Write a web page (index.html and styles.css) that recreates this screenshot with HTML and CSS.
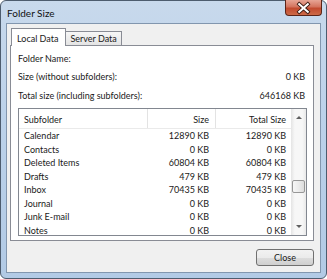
FILE: index.html
```html
<!DOCTYPE html>
<html lang="en">
<head>
  <meta charset="UTF-8" />
  <title>Folder Size</title>
  <link rel="stylesheet" href="styles.css">
</head>
<body>

  <div class="window">
    <div class="titlebar">
      <span class="title">Folder Size</span>
      <span class="close-x">
        <svg width="37" height="16" viewBox="0 0 37 16">
          <path d="M14 4 L23 12 M23 4 L14 12" stroke="#3a1a12" stroke-width="4" stroke-linecap="square"/>
          <path d="M14 4 L23 12 M23 4 L14 12" stroke="#fff" stroke-width="2.2" stroke-linecap="square"/>
        </svg>
      </span>
    </div>

    <div class="client">
      <div class="tabs">
        <span class="tab selected">Local Data</span>
        <span class="tab">Server Data</span>
      </div>

      <div class="panel">
        <div class="info-row"><span>Folder Name:</span><span></span></div>
        <div class="info-row"><span>Size (without subfolders):</span><span>0 KB</span></div>
        <div class="info-row"><span>Total size (including subfolders):</span><span>646168 KB</span></div>

        <div class="listbox">
          <div class="list">
            <div class="list-head">
              <span class="col-name">Subfolder</span>
              <span class="col-size">Size</span>
              <span class="col-total">Total Size</span>
            </div>
            <div class="list-row"><span class="col-name">Calendar</span><span class="col-size">12890 KB</span><span class="col-total">12890 KB</span></div>
            <div class="list-row"><span class="col-name">Contacts</span><span class="col-size">0 KB</span><span class="col-total">0 KB</span></div>
            <div class="list-row"><span class="col-name">Deleted Items</span><span class="col-size">60804 KB</span><span class="col-total">60804 KB</span></div>
            <div class="list-row"><span class="col-name">Drafts</span><span class="col-size">479 KB</span><span class="col-total">479 KB</span></div>
            <div class="list-row"><span class="col-name">Inbox</span><span class="col-size">70435 KB</span><span class="col-total">70435 KB</span></div>
            <div class="list-row"><span class="col-name">Journal</span><span class="col-size">0 KB</span><span class="col-total">0 KB</span></div>
            <div class="list-row"><span class="col-name">Junk E-mail</span><span class="col-size">0 KB</span><span class="col-total">0 KB</span></div>
            <div class="list-row"><span class="col-name">Notes</span><span class="col-size">0 KB</span><span class="col-total">0 KB</span></div>
          </div>
          <div class="scrollbar">
            <span class="sb-btn"><span class="arrow up"></span></span>
            <div class="track"><span class="thumb"></span></div>
            <span class="sb-btn"><span class="arrow down"></span></span>
          </div>
        </div>
      </div>

      <div class="buttons">
        <button class="btn">Close</button>
      </div>
    </div>
  </div>

</body>
</html>
```

FILE: styles.css
```css
body {
  margin: 0;
  background-color: #fff;
  font-family: Lato, "Open Sans", sans-serif;
  font-size: 9px;
  color: #1a1a1a;
}

.window {
  width: 327px;
  height: 279px;
  box-sizing: border-box;
  border: 1px solid #4d5c6e;
  border-radius: 6px;
  background: linear-gradient(to bottom, #c8d9ec 0%, #bcd2ea 40%, #b2cae5 100%);
  padding: 0 5px 5px 5px;
  display: flex;
  flex-direction: column;
}

.titlebar {
  height: 22px;
  flex: none;
  display: flex;
  align-items: flex-start;
  justify-content: space-between;
}

.title {
  font-size: 10px;
  color: #111;
  margin-top: 6px;
  margin-left: 1px;
}

.close-x {
  width: 37px;
  height: 16px;
  margin-top: -1px;
  margin-right: -1px;
  box-sizing: border-box;
  border: 1px solid #5b2418;
  border-top: none;
  border-radius: 0 0 4px 4px;
  background: linear-gradient(to bottom, #e7a595 0%, #d4745e 45%, #c24a2f 55%, #cc6a47 100%);
  display: flex;
}

.client {
  height: 250px;
  box-sizing: border-box;
  background-color: #f0f0f0;
  border: 1px solid #8296ae;
  padding: 4px 6px 6px 3px;
  display: flex;
  flex-direction: column;
}

.tabs {
  height: 17px;
  flex: none;
  display: flex;
  align-items: flex-end;
  padding-left: 1px;
  position: relative;
  z-index: 1;
}

.tab {
  height: 13px;
  line-height: 14px;
  padding: 0 4px;
  border: 1px solid #898c95;
  border-bottom: none;
  background: linear-gradient(to bottom, #f6f6f6, #e4e4e4);
  margin-left: -1px;
}

.tab.selected {
  height: 17px;
  line-height: 19px;
  background-color: #fff;
  background-image: none;
  margin-bottom: -1px;
  padding: 0 7px 0 5px;
  margin-left: 0;
}

.panel {
  height: 196px;
  flex: none;
  box-sizing: border-box;
  background-color: #fff;
  border: 1px solid #898c95;
  padding: 2.75px 8px 0 7px;
  display: flex;
  flex-direction: column;
}

.info-row {
  height: 18.5px;
  line-height: 20px;
  display: flex;
  justify-content: space-between;
}

.listbox {
  height: 128px;
  flex: none;
  box-sizing: border-box;
  margin-top: 3.75px;
  margin-right: -2px;
  border: 1px solid #828790;
  display: flex;
  overflow: hidden;
}

.list {
  flex: 1;
  overflow: hidden;
}

.list-head,
.list-row {
  display: flex;
}

.list-head {
  height: 19px;
  line-height: 21px;
  border-bottom: 1px solid #eaeaea;
}

.list-row {
  height: 13.5px;
  line-height: 14.5px;
}

.col-name {
  width: 128px;
  padding-left: 5px;
  box-sizing: border-box;
}

.col-size {
  width: 68px;
  text-align: right;
  padding-right: 6px;
  box-sizing: border-box;
}

.col-total {
  flex: 1;
  text-align: right;
  padding-right: 5px;
}

.list-head .col-size,
.list-head .col-total {
  border-left: 1px solid #e3e3e3;
}

.scrollbar {
  width: 15px;
  flex: none;
  background: linear-gradient(to right, #e4e4e4, #f7f7f7 25%, #f7f7f7 75%, #e9e9e9);
  display: flex;
  flex-direction: column;
}

.sb-btn {
  height: 17px;
  display: flex;
  align-items: center;
  justify-content: center;
}

.arrow {
  width: 0;
  height: 0;
  border-left: 3px solid transparent;
  border-right: 3px solid transparent;
}

.arrow.up {
  border-bottom: 3px solid #606060;
}

.arrow.down {
  border-top: 3px solid #606060;
}

.track {
  flex: 1;
  display: flex;
  justify-content: center;
}

.thumb {
  width: 13px;
  height: 13px;
  margin-top: 54px;
  box-sizing: border-box;
  border: 1px solid #979797;
  border-radius: 2px;
  background: linear-gradient(to right, #f7f7f7, #ececec 50%, #dcdcdc);
}

.buttons {
  flex: none;
  display: flex;
  justify-content: flex-end;
  padding-top: 8px;
}

.btn {
  width: 58px;
  height: 17px;
  padding: 0;
  font-family: Lato, "Open Sans", sans-serif;
  font-size: 9px;
  color: #1a1a1a;
  border: 1px solid #707070;
  border-radius: 3px;
  background: linear-gradient(to bottom, #f2f2f2 0%, #ebebeb 50%, #dddddd 51%, #cfcfcf 100%);
}
```
